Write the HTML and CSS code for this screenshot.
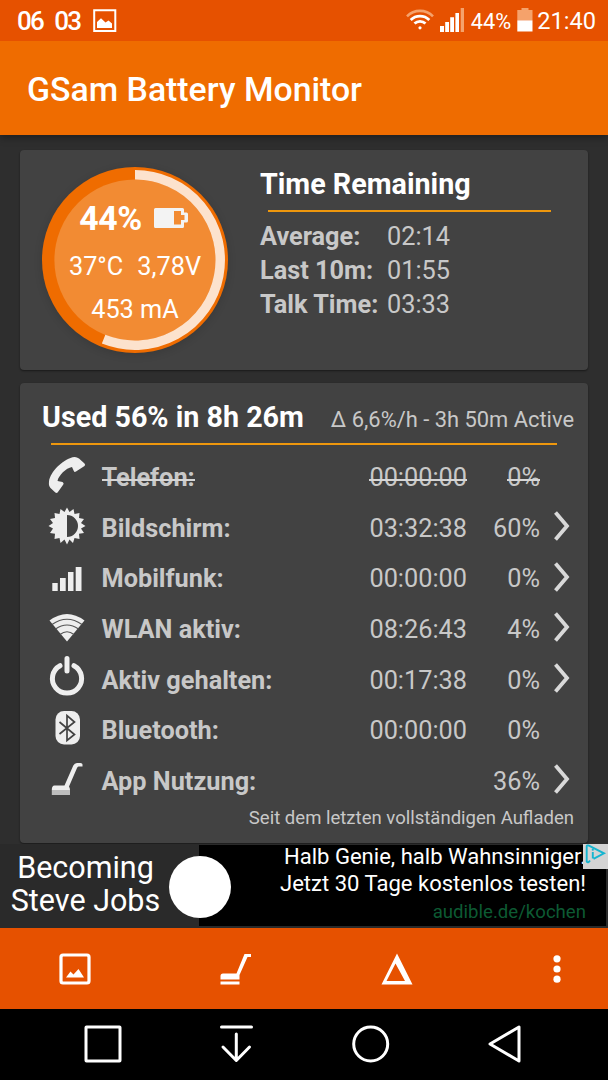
FILE: index.html
```html
<!DOCTYPE html>
<html lang="de">
<head>
<meta charset="utf-8">
<title>GSam Battery Monitor</title>
<link rel="stylesheet" href="styles.css">
</head>
<body>
<div class="screen">
  <div class="status">
    <span class="status-num">06</span>
    <span class="status-num second">03</span>
    <svg class="status-pic" width="24" height="24" viewBox="0 0 24 24"><path d="M1.2 1.2H22.3V22.1H1.2Z" fill="none" stroke="#fff" stroke-width="2"/><path d="M4 19V13L8 9.300L12.500 13.500L15.500 11.500L19 14.500V19Z" fill="#fff"/></svg>
    <span class="spacer"></span>
    <svg class="status-wifi" width="28" height="22" viewBox="0 0 28 22" fill="none" stroke="#fff" stroke-width="2.8"><path d="M1 7.3A18.3 18.3 0 0 1 27 7.3" stroke="#f5a26b" stroke-width="2.6"/><path d="M4.700 11A13.200 13.200 0 0 1 23.300 11"/><path d="M8.500 14.600A7.900 7.900 0 0 1 19.500 14.600"/><circle cx="14" cy="18.800" r="1.600" fill="#fff" stroke="none"/></svg>
    <svg class="status-signal" width="24" height="24" viewBox="0 0 24 24" fill="#fff"><path d="M0 18H4V24H0ZM5.200 14H9V24H5.200ZM10.200 9.300H14V24H10.200ZM15.400 5H19V24H15.400Z"/><path d="M20.700 0H24V24H20.700Z" fill="#f5a26b"/></svg>
    <span class="status-pct">44%</span>
    <svg class="status-batt" width="16" height="24" viewBox="0 0 16 24"><path d="M4.500 0H11.500V2H15.500V12.300H0.300V2H4.500Z" fill="#f5a26b"/><path d="M0.300 12.300H15.500V23.500H0.300Z" fill="#fff"/></svg>
    <span class="status-time">21:40</span>
  </div>
  <div class="appbar"><span class="title">GSam Battery Monitor</span></div>

  <div class="content">
    <div class="card summary">
      <div class="gauge">
        <svg class="gauge-ring" width="186" height="186" viewBox="42 167 186 186"><circle cx="135" cy="260" r="93" fill="#ef6c00"/><circle cx="135" cy="260" r="80.600" fill="#f28b33"/><path d="M135 174.800A85.200 85.200 0 1 1 103.600 339.200" fill="none" stroke="#fce2cd" stroke-width="9.500"/></svg>
        <div class="gauge-text">
          <div class="gauge-top"><span class="gauge-level">44%</span><svg width="34" height="22" viewBox="0 0 34 22"><path fill-rule="evenodd" d="M1.500 1H28.500Q30 1 30 2.500V5.500H32.500Q34 5.500 34 7V14Q34 15.500 32.500 15.500H30V19.500Q30 21 28.500 21H1.500Q0 21 0 19.500V2.500Q0 1 1.500 1ZM20 4V17.500H27V13H30.500V8H27V4Z" fill="#f3f3f3"/></svg></div>
          <div class="gauge-mid"><span>37°C</span><span>3,78V</span></div>
          <div class="gauge-low">453 mA</div>
        </div>
      </div>
      <div class="remaining">
        <div class="heading">Time Remaining</div>
        <div class="rule"></div>
        <div class="times">
          <b>Average:</b><span>02:14</span>
          <b>Last 10m:</b><span>01:55</span>
          <b>Talk Time:</b><span>03:33</span>
        </div>
      </div>
    </div>

    <div class="card usage">
      <div class="usage-head"><span class="heading">Used 56% in 8h 26m</span><span class="rate">Δ 6,6%/h - 3h 50m Active</span></div>
      <div class="rule"></div>
      <div class="rows">
        <div class="row struck">
          <svg class="icon" width="50" height="50" viewBox="0 0 50 50"><path d="M30.500 6.300Q34 5.100 37 7.500L42.500 12.500Q43.800 13.800 42.500 15L34 20.500Q32.500 21.500 31.800 20L30 16C24 17 16.500 24.500 15.500 30L20.500 31Q22.300 32 21.300 33.500L15.800 41.300Q14.800 42.500 13.300 41.500L8.500 37Q6.500 35 7 30.500C8.500 20.500 20 9.500 30.500 6.300Z"/></svg>
          <b class="label">Telefon:</b><span class="time">00:00:00</span><span class="pct">0%</span><span></span>
        </div>
        <div class="row">
          <svg class="icon" width="50" height="50" viewBox="0 0 50 50"><path fill-rule="evenodd" d="M25 5.500L27.500 10L31.500 7L32.500 12L37.500 11L37 16L42 17L39 21L43.500 24L39 26.500L42 31L37 31.700L37.500 37L32.500 36L31 41L27.500 37.500L25 42.500L22.500 37.500L18.500 41L17.500 36L12.500 37L13 31.700L8 31L11 26.500L6.500 24L11 21L8 17L13 16L12.500 11L17.500 12L18.500 7L22.500 10ZM25 13V35A11 11 0 0 0 25 13Z"/></svg>
          <b class="label">Bildschirm:</b><span class="time">03:32:38</span><span class="pct">60%</span><svg class="chev" width="20" height="32" viewBox="0 0 20 32"><path d="M4.500 2.500L16 16L4.500 29.500"/></svg>
        </div>
        <div class="row">
          <svg class="icon" width="50" height="50" viewBox="0 0 50 50"><path d="M10.300 31H15.700V39H10.300ZM18 26H23.700V39H18ZM26 20H31.500V39H26ZM33.700 15H39.500V39H33.700Z"/></svg>
          <b class="label">Mobilfunk:</b><span class="time">00:00:00</span><span class="pct">0%</span><svg class="chev" width="20" height="32" viewBox="0 0 20 32"><path d="M4.500 2.500L16 16L4.500 29.500"/></svg>
        </div>
        <div class="row">
          <svg class="icon" width="50" height="50" viewBox="0 0 50 50"><path d="M25 38.500L7.500 17.500Q25 4.500 42.500 17.500Z"/><g fill="none" stroke="#555" stroke-width="1.100"><path d="M10 21.500Q25 11 40 21.500M13.500 26Q25 18 36.500 26M18 31.500Q25 26 32 31.500"/></g></svg>
          <b class="label">WLAN aktiv:</b><span class="time">08:26:43</span><span class="pct">4%</span><svg class="chev" width="20" height="32" viewBox="0 0 20 32"><path d="M4.500 2.500L16 16L4.500 29.500"/></svg>
        </div>
        <div class="row">
          <svg class="icon" width="50" height="50" viewBox="0 0 50 50"><path d="M18 11.700A14.600 14.600 0 1 0 32 11.700M25 4.500V17" fill="none" stroke="#eee" stroke-width="5" stroke-linecap="round"/></svg>
          <b class="label">Aktiv gehalten:</b><span class="time">00:17:38</span><span class="pct">0%</span><svg class="chev" width="20" height="32" viewBox="0 0 20 32"><path d="M4.500 2.500L16 16L4.500 29.500"/></svg>
        </div>
        <div class="row">
          <svg class="icon" width="50" height="50" viewBox="0 0 50 50"><rect x="13.500" y="7" width="24.500" height="33.500" rx="8.500"/><path d="M17.500 18L32.500 30.500L25 36.500V11.500L32.500 18L17.500 30" fill="none" stroke="#424242" stroke-width="1.700"/></svg>
          <b class="label">Bluetooth:</b><span class="time">00:00:00</span><span class="pct">0%</span><span></span>
        </div>
        <div class="row">
          <svg class="icon" width="50" height="50" viewBox="0 0 50 50"><path d="M12.500 30.500H22.500L31.300 10.500Q32.500 8 35 8H38.500Q40.500 8 40.500 9.500V11.500H36.500Q35.500 11.500 35 13L27 31.500Q28 33 28 35H9.800Q9.800 30.500 12.500 30.500Z"/><path d="M9.800 35H28V40H9.800Z" fill="#bdbdbd"/></svg>
          <b class="label">App Nutzung:</b><span class="time"></span><span class="pct">36%</span><svg class="chev" width="20" height="32" viewBox="0 0 20 32"><path d="M4.500 2.500L16 16L4.500 29.500"/></svg>
        </div>
      </div>
      <div class="since">Seit dem letzten vollständigen Aufladen</div>
    </div>
  </div>

  <div class="ad">
    <div class="ad-name">Becoming<br>Steve Jobs</div>
    <div class="ad-body">
      <div class="ad-line">Halb Genie, halb Wahnsinniger.</div>
      <div class="ad-line">Jetzt 30 Tage kostenlos testen!</div>
      <div class="ad-link">audible.de/kochen</div>
    </div>
    <div class="ad-dot"></div>
    <svg class="ad-choices" width="25" height="25" viewBox="0 0 25 25"><path d="M0 0H25V25H0Z" fill="#d4d4d4"/><path d="M7 16.500Q5 19.500 3.700 17.500V2Q4 1 5.500 1.500L21 9.300L10.500 14.800M9.800 8V14.500" fill="none" stroke="#16b5d0" stroke-width="1.900"/><circle cx="9.800" cy="5.700" r="1.100" fill="#16b5d0"/></svg>
  </div>

  <div class="toolbar">
    <svg width="32" height="32" viewBox="0 0 32 32"><rect x="2" y="2" width="28" height="28" rx="2" fill="none" stroke="#fff" stroke-width="3.200"/><path d="M7 24.500L11.500 18.500L14.500 21.500L19.500 16L25 24.500Z" fill="#fff"/></svg>
    <svg width="32" height="32" viewBox="0 0 32 32" fill="#fff"><path d="M3 20.500H16.500L24.500 1H31V4H27.500L19.500 22V26.500H.5V23Q.5 20.500 3 20.500ZM.5 28.500H19.500V31.500H.5Z"/></svg>
    <svg width="32" height="32" viewBox="0 0 32 32" fill="#fff"><path fill-rule="evenodd" d="M16 .5L31.500 31.500H.5ZM14.500 10.500L5.500 28H24Z"/></svg>
    <svg width="8" height="32" viewBox="0 0 8 32" fill="#fff"><circle cx="4" cy="5.800" r="3.600"/><circle cx="4" cy="16" r="3.600"/><circle cx="4" cy="26.200" r="3.600"/></svg>
  </div>
  <div class="navbar">
    <svg width="38" height="38" viewBox="0 0 38 38"><rect x="2" y="2" width="34" height="34" rx=".5"/></svg>
    <svg width="38" height="38" viewBox="0 0 38 38"><path d="M3.500 2H33.500M18.300 9V34.500M5 22L18.300 35.500L31.500 22"/></svg>
    <svg width="38" height="38" viewBox="0 0 38 38"><circle cx="18.700" cy="19" r="17"/></svg>
    <svg width="38" height="38" viewBox="0 0 38 38"><path d="M33 2V36L4 19Z"/></svg>
  </div>
</div>
</body>
</html>
```
FILE: styles.css
```css
* { box-sizing: border-box; }
body { margin: 0; background: #2e2e2e; font-family: Roboto, "Noto Sans", sans-serif; }
svg { display: block; flex: none; }
.screen { width: 608px; height: 1080px; display: flex; flex-direction: column; overflow: hidden; color: #c8c8c8; white-space: nowrap; }

.status { height: 41px; background: #e65100; color: #fff; display: flex; align-items: center; padding: 0 12px 0 17px; font-size: 23.6px; line-height: 41px; position: relative; z-index: 1; }
.status-num { font-weight: 500; font-size: 26px; letter-spacing: -1.7px; padding-top: 1px; }
.second { margin-left: 11px; }
.status-pic { margin-left: 13px; }
.spacer { flex: 1; }
.status-wifi { margin: 0 6px 1px 0; }
.status-signal { margin-bottom: 1px; }
.status-pct { font-size: 21.8px; margin: 2px 6px 0 7px; }
.status-batt { margin-bottom: 1px; }
.status-time { margin: 1px 0 0 4px; }
.appbar { height: 94px; background: #ef6c00; padding-left: 27px; display: flex; align-items: center; box-shadow: 0 2px 8px #0006; color: #fff; }
.title { font-size: 33.8px; font-weight: 500; padding-top: 2px; }

.content { padding: 15px 20px 0; height: 709px; display: flex; flex-direction: column; gap: 13px; }
.card { background: #424242; border-radius: 4px; box-shadow: 0 1px 2px #0007; }
.heading { color: #fff; font-weight: 700; font-size: 28.7px; line-height: 34px; }
.rule { height: 2px; background: #ee970d; }

.summary { height: 220px; display: flex; padding: 17px 22px 0; }
.gauge { width: 186px; height: 186px; display: grid; border-radius: 50%; box-shadow: 0 2px 9px #0002; color: #fff; }
.gauge-ring, .gauge-text { grid-area: 1 / 1; }
.gauge-text { padding-top: 31px; text-align: center; font-size: 25.3px; z-index: 1; }
.gauge-top { display: flex; align-items: center; justify-content: center; gap: 12px; height: 40px; padding-right: 3px; }
.gauge-top svg { margin-bottom: 1px; }
.gauge-level { font-size: 33.8px; font-weight: 700; letter-spacing: -.5px; }
.gauge-mid { display: flex; justify-content: center; gap: 14px; line-height: 30px; margin-top: 14px; }
.gauge-low { line-height: 30px; margin-top: 13px; }
.remaining { margin-left: 32px; width: 291px; }
.remaining .rule { margin: 9px 0 8px 8px; width: 283px; }
.times { display: grid; grid-template-columns: 127px auto; grid-auto-rows: 34px; line-height: 34px; font-size: 25.3px; }

.usage { height: 460px; padding: 17px 14px 0 22px; }
.usage-head { display: flex; justify-content: space-between; align-items: baseline; }
.rate { font-size: 21.9px; }
.usage .rule { margin: 9px 17px 6px 9px; }
.rows { display: grid; grid-auto-rows: 50.67px; }
.row { display: grid; grid-template-columns: 59.5px 1fr 130px 73px 34px; align-items: center; font-size: 25.3px; }
.label, .time, .pct { line-height: 30px; margin-top: 2px; }
.time, .pct { text-align: right; }
.struck .label, .struck .time, .struck .pct { position: relative; justify-self: start; }
.struck .time, .struck .pct { justify-self: end; }
.struck .label::after, .struck .time::after, .struck .pct::after { content: ""; position: absolute; left: 0; right: 0; top: 16px; height: 2px; background: #d6d6d6; }
.icon { fill: #eee; margin-bottom: 2px; }
.chev { margin: 0 0 3px 11px; fill: none; stroke: #d9d9d9; stroke-width: 3.8; }
.since { text-align: right; font-size: 18.55px; line-height: 24px; }

.ad { height: 84px; display: flex; position: relative; background: #2a2a2a; color: #fff; }
.ad-name { width: 199px; padding: 7px 28px 0 0; text-align: center; font-size: 30.5px; line-height: 33px; }
.ad-body { width: 407px; height: 81px; margin-top: 1px; background: #000; text-align: right; padding-right: 20px; }
.ad-line { font-size: 22.05px; line-height: 27px; position: relative; top: -2px; }
.ad-link { font-size: 18.6px; line-height: 26px; color: #0d5a33; }
.ad-dot { position: absolute; left: 169px; top: 12px; width: 62px; height: 62px; border-radius: 50%; background: #fff; }
.ad-choices { position: absolute; right: 0; top: 0; }

.toolbar { height: 81px; background: #e65100; display: flex; align-items: center; padding-left: 59px; }
.toolbar svg:nth-child(2) { margin-left: 129px; }
.toolbar svg:nth-child(3) { margin-left: 129px; }
.toolbar svg:nth-child(4) { margin-left: 140px; }
.navbar { height: 71px; background: #000; display: flex; align-items: center; justify-content: space-between; padding: 0 84px 1px; fill: none; stroke: #fff; stroke-width: 3; stroke-linecap: round; stroke-linejoin: round; }
```
